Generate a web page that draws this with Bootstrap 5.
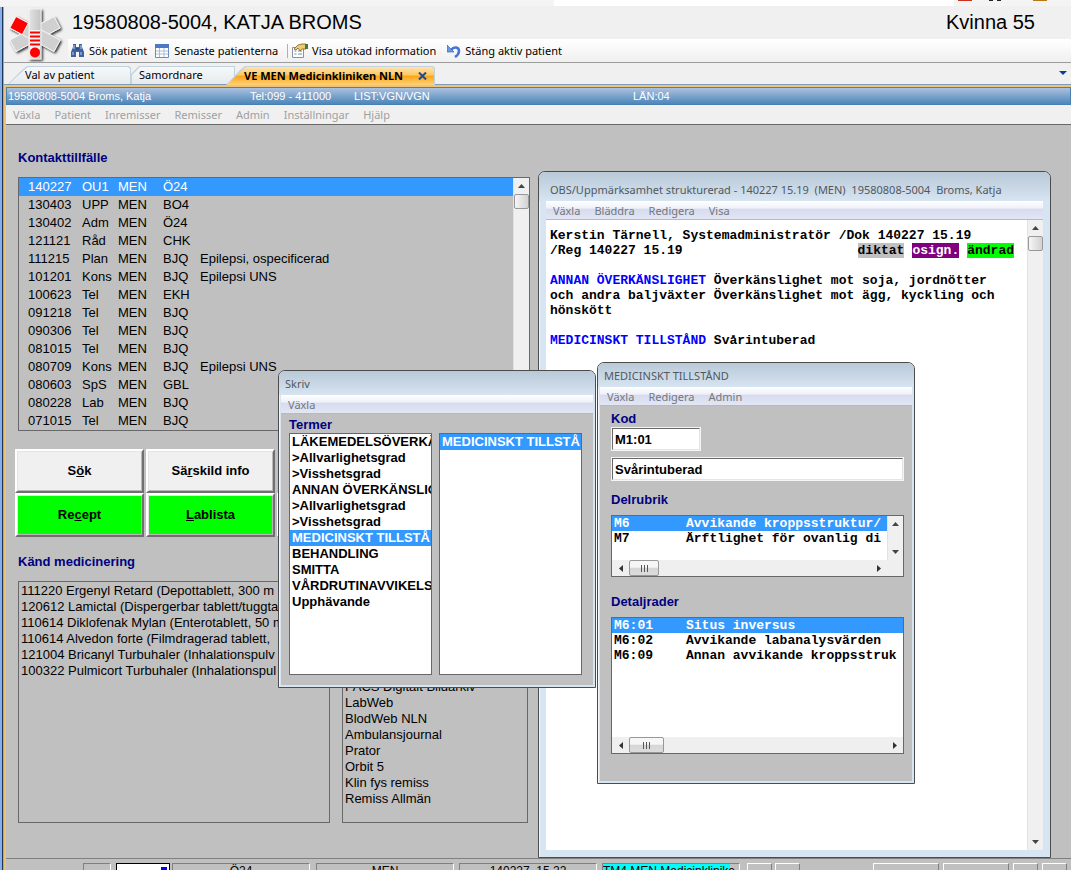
<!DOCTYPE html>
<html lang="sv">
<head>
<meta charset="utf-8">
<meta name="viewport" content="width=device-width, initial-scale=1">
<title>19580808-5004, KATJA BROMS</title>
<link href="https://cdn.jsdelivr.net/npm/bootstrap@5.3.0/dist/css/bootstrap.min.css" rel="stylesheet">
<style>
  :root { --face: #c0c0c0; --sel: #3399ff; --navy: #000080; --chrome: #f0f0f0; }
  body { background: var(--chrome); color: #000; overflow: hidden; font: 13px/16px "Liberation Sans", Arial, sans-serif; }
  button { border: 0; padding: 0; background: none; color: inherit; font: inherit; white-space: nowrap; }
  svg { display: block; flex: none; }
  .ui-text { font: 11px/16px "Noto Sans", "Segoe UI", sans-serif; }

  /* application frame; the status bar hangs below the window edge */
  .app { height: calc(100vh + 16px); }
  .app-edge { width: 4px; margin-top: 7px; background: linear-gradient(90deg, #88b0e8 2px, #1c3558 2px 3px, #a8a8a8 3px); }
  .app-main { min-width: 0; }
  .top-strip { height: 6px; margin-left: -4px; background: #f4f4f4; }
  .top-gap { width: 554px; }
  .top-doc { width: 400px; background: #fff; }
  .top-bits { height: 1px; }
  .masthead { height: 57px; border-bottom: 1px solid #9c9c9c; }
  .big-text { font-size: 20px; line-height: 33px; }
  .kvinna { padding-right: 36px; }
  .tools { height: 23px; padding-left: 2px; background: linear-gradient(#fff, #f0f0f0); }
  .tools button { gap: 4px; }
  .tools .close-patient { margin-left: 11px; }
  .tool-sep { width: 1px; height: 14px; margin: 0 4px 0 9px; background: #b0b0b0; }

  /* tabs */
  .tab-strip { height: 22px; padding: 3px 4px 0; border-bottom: 1px solid #7d9cbc; }
  .doc-tab { position: relative; height: 18px; z-index: 0; text-align: left; }
  .doc-tab::before, .doc-tab::after { content: ""; position: absolute; inset: 0; z-index: -1; background: #c2d2de; clip-path: polygon(0 100%, 14px 4px, 19px 0, calc(100% - 2px) 0, 100% 2px, 100% 100%); }
  .doc-tab::after { inset: 1px 1px 0 1px; background: linear-gradient(#f6f9fa, #e6eaec); }
  .tab-a { width: 123px; padding-left: 17px; }
  .tab-b { width: 104px; padding-left: 8px; }
  .tab-b::before, .tab-b::after { clip-path: polygon(0 8px, 8px 0, 100% 0, 100% 100%, 0 100%); }
  .tab-on { width: 209px; margin-left: -9px; padding: 0 8px 0 18px; height: 19px; margin-bottom: -1px; font-weight: 700; }
  .tab-on::after { background: linear-gradient(#ffe3ae, #ffc862 45%, #fba514 50%, #ffd27a); }
  .gold { border-top: 2px solid #f0c478; border-left: 2px solid #ecc27a; }
  .patient-bar { height: 18px; display: grid; grid-template-columns: 242px 104px 279px 1fr; padding: 0 1px; background: linear-gradient(#abc1df, #4c86b9); border: 1px solid #4880b4; font-size: 11px; line-height: 17px; color: #fff; }
  .main-menu { height: 20px; gap: 14px; padding: 1px 7px 0; border-bottom: 1px solid #686868; color: #a0a0a0; background: var(--chrome); }

  /* desktop */
  .desk { background: var(--face); }
  .base { width: 524px; padding: 22px 0 0 9px; }
  .base .inset-x { margin-left: 3px; }
  .head-n { margin: 0; font-size: 13px; height: 20px; line-height: 22px; font-weight: 700; color: var(--navy); }
  .well { border: 1px solid #686868; overflow: hidden; white-space: nowrap; }
  .well ul { margin: 0; padding: 0; list-style: none; }
  .contacts { height: 254px; margin-top: 10px; }
  .contacts table { width: 100%; table-layout: fixed; border-collapse: collapse; }
  .contacts td { padding: 0; height: 18px; line-height: 18px; }
  .contacts td:first-child { padding-left: 9px; }
  .c-date { width: 63px; } .c-type { width: 36px; } .c-unit { width: 45px; } .c-sign { width: 37px; }
  .is-sel { background: var(--sel); color: #fff; }
  .keys { display: grid; grid-template-columns: 129px 129px 129px; grid-auto-rows: 44px; column-gap: 2px; margin: 18px 0 14px; }
  .keys button, .keys .key-edge { background: var(--chrome); border: 2px solid; border-color: #fff #707070 #707070 #fff; font-weight: 700; box-shadow: inset 1px 1px #e4e4e4, inset -1px -1px #b8b8b8; }
  .keys .go { background: #0f0; }
  .boxes { gap: 12px; height: 242px; margin-top: 10px; }
  .boxes .meds { width: 312px; padding: 1px 0 0 2px; }
  .boxes .links { width: 186px; padding: 97px 0 0 2px; }

  /* floating windows */
  .win { position: absolute; border: 1px solid #4c4c4c; border-radius: 7px 7px 0 0; background: #d7e4f1; box-shadow: inset 1px 1px #f2f6fa; }
  .win-title { color: #50585f; padding-left: 6px; line-height: 26px; height: 24px; border-radius: 6px 6px 0 0; background: linear-gradient(#b9c9d8, #d7e4f1); white-space: pre; }
  .win-menu { height: 19px; gap: 14px; padding: 1px 7px 0; color: #74777b; border-bottom: 1px solid #b4b8cc; background: linear-gradient(#fff, #eef1f9 40%, #d6dbef 45%, #e2e6f5); }
  .win-main { background: var(--face); }
  .win-obs { left: 532px; top: 46px; width: 513px; bottom: 0; padding: 0 7px 7px; }
  .win-obs .win-title { margin: 0 -7px; padding-left: 11px; height: 29px; line-height: 36px; }
  .win-skriv { left: 272px; top: 245px; width: 318px; height: 318px; padding: 0 2px 2px; }
  .win-med { left: 591px; top: 237px; width: 318px; height: 422px; padding: 0 2px 2px; }
  .win-skriv .win-title, .win-med .win-title { margin: 0 -2px; }
  .win-skriv .win-main { padding: 2px 11px 10px 8px; font-weight: 700; }
  .win-skriv .head-n { height: 17px; line-height: 18px; }
  .win-skriv .well, .win-med .well { background: #fff; }
  .win-skriv .well { flex: 1 1 0; }
  .win-skriv li { padding-left: 2px; }
  .pair { gap: 7px; height: 242px; }
  .mono { font: 700 13px/15px "Liberation Mono", "Courier New", monospace; }
  .note { padding: 8px 13px 0 4px; }
  .note p { margin: 0; height: 15px; white-space: pre; }
  .note b { color: #00f; }
  .note-tags { gap: 8px; }
  .t-dikt { background: #c0c0c0; } .t-osign { background: #800080; color: #fff; } .t-andr { background: #0f0; }
  .win-med .win-main { padding: 3px 8px 0 11px; }
  .win-med label.head-n { height: 18px; line-height: 19px; }
  .field { display: block; height: 24px; border: 2px solid; border-color: #686868 #e4e4e4 #e4e4e4 #686868; outline: 1px solid #f4f4f4; outline-offset: -1px; padding: 0 2px; background: #fff; font: 700 13px/18px "Liberation Sans", Arial, sans-serif; border-radius: 0; }
  .field-kod { width: 90px; margin-bottom: 6px; }
  .field-name { width: 100%; margin-bottom: 8px; }
  .well-part { height: 62px; margin: 6px 0 14px; }
  .well-part .rows { min-height: 0; }
  .well-detail { height: 137px; margin-top: 6px; }
  .code-row { display: grid; grid-template-columns: 72px 1fr; padding-left: 2px; height: 15px; overflow: hidden; }

  /* scroll bars */
  .vbar { width: 16px; background: #f0f0f0; border-left: 1px solid #e2e2e2; }
  .vbar .arr { height: 16px; display: grid; place-items: center; }
  .hbar { height: 16px; background: #efefef; }
  .hbar .arr { width: 17px; display: grid; place-items: center; }
  .thumb { border: 1px solid #989898; border-radius: 2px; background: linear-gradient(90deg, #f6f6f6, #d2d2d2); }
  .hbar .thumb { width: 30px; display: grid; place-items: center; background: linear-gradient(#f6f6f6 45%, #d6d6d6 50%, #dcdcdc); }
  .hbar .thumb-w { width: 35px; }
  .vbar .thumb { height: 15px; }

  /* status bar */
  .status { height: 28px; border-top: 1px solid #808080; background: var(--face); padding: 4px 0 0 77px; }
  .status > div { height: 24px; border: 1px solid; border-color: #808080 #fff #fff #808080; text-align: center; flex: none; line-height: 15px; font-size: 12px; white-space: nowrap; overflow: hidden; }
  .status .up { border-color: #fff #808080 #808080 #fff; }
  .status .w-s { width: 25px; } .status .w-m { width: 66px; } .status .w-l { width: 138px; }
  .status .w-x { width: 28px; margin-right: 5px; }
  .status .entry { width: 54px; margin-right: 2px; border: 1px solid #000; background: #fff; }
  .gap-6 { margin-right: 6px; } .gap-5 { margin-right: 5px; } .gap-7 { margin-right: 7px; } .gap-3x { margin-right: 3px; }
  .caret { width: 6px; height: 20px; background: #00f; margin: 3px 2px 0 auto; }
  .cy { background: #0ff; display: block; width: 127px; text-align: left; }
</style>
</head>
<body>
<svg width="0" height="0" class="position-absolute" aria-hidden="true">
  <defs>
    <symbol id="up" viewBox="0 0 7 4"><path d="M0 4 3.500 0 7 4z" fill="#444"/></symbol>
    <symbol id="dn" viewBox="0 0 7 4"><path d="M0 0h7L3.500 4z" fill="#444"/></symbol>
    <symbol id="lf" viewBox="0 0 4 7"><path d="M4 0v7L0 3.500z" fill="#333"/></symbol>
    <symbol id="rt" viewBox="0 0 4 7"><path d="M0 0v7l4-3.500z" fill="#333"/></symbol>
    <symbol id="grip" viewBox="0 0 9 7"><path d="M1.500 0v7M4.500 0v7M7.500 0v7" stroke="#555"/></symbol>
  </defs>
</svg>

<div class="app d-flex">
  <div class="app-edge flex-shrink-0"></div>
  <div class="app-main flex-grow-1 d-flex flex-column">
    <div class="top-strip d-flex flex-shrink-0">
      <div class="top-gap flex-shrink-0"></div><div class="top-doc"></div>
      <svg class="top-bits" width="100" height="1"><path d="M4 0h14v1h-14z" fill="#c8321e"/><path d="M35 0h4v1h-4zM43 0h4v1h-4z" fill="#222"/><path d="M79 0h14v1h-14z" fill="#b87818"/></svg>
    </div>

    <header class="masthead d-flex flex-shrink-0">
      <svg width="64" height="56" viewBox="0 0 64 56" aria-hidden="true">
        <defs>
          <linearGradient id="arm" x1="0" x2="1"><stop offset="0" stop-color="#e2e2e2"/><stop offset="1" stop-color="#c4c4c4"/></linearGradient>
          <filter id="sh" x="-20%" y="-20%" width="150%" height="150%"><feDropShadow dx="1.500" dy="1.500" stdDeviation="1" flood-color="#000" flood-opacity=".8"/></filter>
        </defs>
        <g filter="url(#sh)" stroke="#fafafa" stroke-width=".8">
          <g fill="#d0d0d0">
            <rect x="24.500" y="3" width="13" height="22" transform="rotate(62 31 28)"/>
            <rect x="24.500" y="3" width="13" height="22" transform="rotate(118 31 28)"/>
            <rect x="24.500" y="3" width="13" height="22" transform="rotate(-118 31 28)"/>
            <rect x="24.500" y="3" width="13" height="22" transform="rotate(-62 31 28)"/>
          </g>
          <rect x="24.500" y="3" width="13" height="14" fill="#f00" transform="rotate(-62 31 28)"/>
          <rect x="25" y="3" width="12" height="50" fill="url(#arm)"/>
        </g>
        <path d="M26 24h10v19H26z" fill="#f4f4f4"/>
        <path d="M26 26.500h10M26 30.500h10M26 34.500h10M26 38.500h10" stroke="#f00" stroke-width="2"/>
        <circle cx="31" cy="46.500" r="5" fill="#f00"/>
      </svg>
      <div class="flex-grow-1">
        <div class="d-flex justify-content-between big-text">
          <div class="ps-1">19580808-5004, KATJA BROMS</div>
          <div class="kvinna">Kvinna 55</div>
        </div>
        <nav class="tools ui-text d-flex align-items-center">
          <button type="button" class="d-flex align-items-center">
            <svg width="15" height="15" viewBox="0 0 15 15"><path d="M3 1h3v3h3V1h3v3l2 5v5H9V9H6v5H1V9l2-5z" fill="#3c62a0"/><path d="M4 2v4M11 2v4M3 9v3M11 9v3" stroke="#b8d0f0"/><path d="M6 6h3" stroke="#1c3c78"/></svg>
            Sök patient
          </button>
          <button type="button" class="d-flex align-items-center ms-2">
            <svg width="15" height="14" viewBox="0 0 15 14"><path d="M.5.500h13v13H.5z" fill="#fff" stroke="#6a8cc4"/><path d="M0 0h14v4H0z" fill="#4c78c4"/><path d="M1 7h12M1 10h12M4.500 4v9M9 4v9" stroke="#a9bddc"/></svg>
            Senaste patienterna
          </button>
          <span class="tool-sep"></span>
          <button type="button" class="d-flex align-items-center">
            <svg width="16" height="15" viewBox="0 0 16 15"><path d="M.5 4.500h11v10H.5z" fill="#fff" stroke="#8494a8"/><path d="M2.500 8h2M6 8h4M2.500 11h2M6 11h4" stroke="#6a86b8"/><path d="m2 6 4-4 4-1h4v5h-4L8 8 6 5 4 7z" fill="#f0cc6c" stroke="#806020" stroke-width=".8"/><path d="M13 1h3v5h-3z" fill="#3c7a50"/></svg>
            Visa utökad information
          </button>
          <button type="button" class="d-flex align-items-center close-patient">
            <svg width="14" height="14" viewBox="0 0 14 14"><path d="M4 6c3-4 8-3 8 1 0 2-1 4-4 6" fill="none" stroke="#4474d4" stroke-width="2.500"/><path d="M0 1v7h7z" fill="#6c98e8" stroke="#2c58b4" stroke-width=".6"/></svg>
            Stäng aktiv patient
          </button>
        </nav>
      </div>
    </header>

    <div class="tab-strip ui-text d-flex flex-shrink-0">
      <button type="button" class="doc-tab tab-a">Val av patient</button>
      <button type="button" class="doc-tab tab-b">Samordnare</button>
      <button type="button" class="doc-tab tab-on d-flex align-items-center justify-content-between">VE MEN Medicinkliniken NLN
        <svg width="9" height="8" viewBox="0 0 9 8"><path d="m1 .5 7 7M8 .5l-7 7" stroke="#1c4a94" stroke-width="2"/></svg>
      </button>
      <svg class="ms-auto mt-1" width="8" height="5" viewBox="0 0 8 5"><path d="M0 1h8L4 5z" fill="#0c3c94"/></svg>
    </div>

    <div class="gold flex-grow-1 d-flex flex-column">
      <div class="patient-bar flex-shrink-0"><span>19580808-5004 Broms, Katja</span><span>Tel:099 - 411000</span><span>LIST:VGN/VGN</span><span>LÄN:04</span></div>
      <nav class="main-menu ui-text d-flex flex-shrink-0">
        <button type="button">Växla</button><button type="button">Patient</button><button type="button">Inremisser</button><button type="button">Remisser</button><button type="button">Admin</button><button type="button">Inställningar</button><button type="button">Hjälp</button>
      </nav>

      <main class="desk flex-grow-1 position-relative">
        <section class="base">
          <h2 class="head-n inset-x">Kontakttillfälle</h2>
          <div class="well contacts inset-x d-flex">
            <div class="flex-grow-1">
              <table>
                <colgroup><col class="c-date"><col class="c-type"><col class="c-unit"><col class="c-sign"><col></colgroup>
                <tbody>
                  <tr class="is-sel"><td>140227</td><td>OU1</td><td>MEN</td><td>Ö24</td><td></td></tr>
                  <tr><td>130403</td><td>UPP</td><td>MEN</td><td>BO4</td><td></td></tr>
                  <tr><td>130402</td><td>Adm</td><td>MEN</td><td>Ö24</td><td></td></tr>
                  <tr><td>121121</td><td>Råd</td><td>MEN</td><td>CHK</td><td></td></tr>
                  <tr><td>111215</td><td>Plan</td><td>MEN</td><td>BJQ</td><td>Epilepsi, ospecificerad</td></tr>
                  <tr><td>101201</td><td>Kons</td><td>MEN</td><td>BJQ</td><td>Epilepsi UNS</td></tr>
                  <tr><td>100623</td><td>Tel</td><td>MEN</td><td>EKH</td><td></td></tr>
                  <tr><td>091218</td><td>Tel</td><td>MEN</td><td>BJQ</td><td></td></tr>
                  <tr><td>090306</td><td>Tel</td><td>MEN</td><td>BJQ</td><td></td></tr>
                  <tr><td>081015</td><td>Tel</td><td>MEN</td><td>BJQ</td><td></td></tr>
                  <tr><td>080709</td><td>Kons</td><td>MEN</td><td>BJQ</td><td>Epilepsi UNS</td></tr>
                  <tr><td>080603</td><td>SpS</td><td>MEN</td><td>GBL</td><td></td></tr>
                  <tr><td>080228</td><td>Lab</td><td>MEN</td><td>BJQ</td><td></td></tr>
                  <tr><td>071015</td><td>Tel</td><td>MEN</td><td>BJQ</td><td></td></tr>
                </tbody>
              </table>
            </div>
            <div class="vbar flex-shrink-0"><div class="arr"><svg width="7" height="4"><use href="#up"/></svg></div><div class="thumb"></div></div>
          </div>

          <div class="keys">
            <button type="button">S<u>ö</u>k</button><button type="button">Sä<u>r</u>skild info</button><span></span>
            <button type="button" class="go">Re<u>c</u>ept</button><button type="button" class="go"><u>L</u>ablista</button><span class="key-edge"></span>
          </div>

          <h2 class="head-n inset-x">Känd medicinering</h2>
          <div class="boxes inset-x d-flex">
            <div class="well meds">
              <ul>
                <li>111220 Ergenyl Retard (Depottablett, 300 m</li>
                <li>120612 Lamictal (Dispergerbar tablett/tuggta</li>
                <li>110614 Diklofenak Mylan (Enterotablett, 50 m</li>
                <li>110614 Alvedon forte (Filmdragerad tablett,</li>
                <li>121004 Bricanyl Turbuhaler (Inhalationspulv</li>
                <li>100322 Pulmicort Turbuhaler (Inhalationspul</li>
              </ul>
            </div>
            <div class="well links">
              <ul>
                <li>PACS Digitalt Bildarkiv</li><li>LabWeb</li><li>BlodWeb NLN</li><li>Ambulansjournal</li><li>Prator</li><li>Orbit 5</li><li>Klin fys remiss</li><li>Remiss Allmän</li>
              </ul>
            </div>
          </div>
        </section>

        <section class="win win-obs d-flex flex-column">
          <div class="win-title ui-text">OBS/Uppmärksamhet strukturerad - 140227 15.19  (MEN)  19580808-5004  Broms, Katja</div>
          <nav class="win-menu ui-text d-flex flex-shrink-0"><button type="button">Växla</button><button type="button">Bläddra</button><button type="button">Redigera</button><button type="button">Visa</button></nav>
          <div class="flex-grow-1 d-flex bg-white">
            <div class="note mono flex-grow-1">
              <p>Kerstin Tärnell, Systemadministratör /Dok 140227 15.19</p>
              <p class="d-flex note-tags"><span class="me-auto">/Reg 140227 15.19</span><span class="t-dikt">diktat</span><span class="t-osign">osign.</span><span class="t-andr">ändrad</span></p>
              <p></p>
              <p><b>ANNAN ÖVERKÄNSLIGHET</b> Överkänslighet mot soja, jordnötter</p>
              <p>och andra baljväxter Överkänslighet mot ägg, kyckling och</p>
              <p>hönskött</p>
              <p></p>
              <p><b>MEDICINSKT TILLSTÅND</b> Svårintuberad</p>
            </div>
            <div class="vbar flex-shrink-0 d-flex flex-column"><div class="arr"><svg width="7" height="4"><use href="#up"/></svg></div><div class="thumb"></div><div class="arr mt-auto"><svg width="7" height="4"><use href="#dn"/></svg></div></div>
          </div>
        </section>

        <section class="win win-skriv d-flex flex-column">
          <div class="win-title ui-text">Skriv</div>
          <nav class="win-menu ui-text d-flex flex-shrink-0"><button type="button">Växla</button></nav>
          <div class="win-main flex-grow-1">
            <h2 class="head-n">Termer</h2>
            <div class="pair d-flex">
              <div class="well"><ul>
                <li>LÄKEMEDELSÖVERKÄ</li><li>&gt;Allvarlighetsgrad</li><li>&gt;Visshetsgrad</li><li>ANNAN ÖVERKÄNSLIG</li><li>&gt;Allvarlighetsgrad</li><li>&gt;Visshetsgrad</li><li class="is-sel">MEDICINSKT TILLSTÅ</li><li>BEHANDLING</li><li>SMITTA</li><li>VÅRDRUTINAVVIKELS</li><li>Upphävande</li>
              </ul></div>
              <div class="well"><ul><li class="is-sel">MEDICINSKT TILLSTÅ</li></ul></div>
            </div>
          </div>
        </section>

        <section class="win win-med d-flex flex-column">
          <div class="win-title ui-text">MEDICINSKT TILLSTÅND</div>
          <nav class="win-menu ui-text d-flex flex-shrink-0"><button type="button">Växla</button><button type="button">Redigera</button><button type="button">Admin</button></nav>
          <div class="win-main flex-grow-1">
            <label class="head-n d-block" for="kod">Kod</label>
            <input class="field field-kod" id="kod" type="text" value="M1:01">
            <input class="field field-name" type="text" value="Svårintuberad" aria-label="Kod, text">
            <h2 class="head-n">Delrubrik</h2>
            <div class="well well-part mono d-flex flex-column">
              <div class="rows flex-grow-1 d-flex">
                <div class="flex-grow-1 overflow-hidden">
                  <div class="code-row is-sel"><span>M6</span><span>Avvikande kroppsstruktur/</span></div>
                  <div class="code-row"><span>M7</span><span>Ärftlighet för ovanlig di</span></div>
                </div>
                <div class="vbar flex-shrink-0 d-flex flex-column"><div class="arr"><svg width="7" height="4"><use href="#up"/></svg></div><div class="arr mt-auto"><svg width="7" height="4"><use href="#dn"/></svg></div></div>
              </div>
              <div class="hbar d-flex pe-3"><div class="arr"><svg width="4" height="7"><use href="#lf"/></svg></div><div class="thumb"><svg width="9" height="7"><use href="#grip"/></svg></div><div class="arr ms-auto"><svg width="4" height="7"><use href="#rt"/></svg></div></div>
            </div>
            <h2 class="head-n">Detaljrader</h2>
            <div class="well well-detail mono d-flex flex-column">
              <div class="flex-grow-1">
                <div class="code-row is-sel"><span>M6:01</span><span>Situs inversus</span></div>
                <div class="code-row"><span>M6:02</span><span>Avvikande labanalysvärden</span></div>
                <div class="code-row"><span>M6:09</span><span>Annan avvikande kroppsstruk</span></div>
              </div>
              <div class="hbar d-flex"><div class="arr"><svg width="4" height="7"><use href="#lf"/></svg></div><div class="thumb thumb-w"><svg width="9" height="7"><use href="#grip"/></svg></div><div class="arr ms-auto"><svg width="4" height="7"><use href="#rt"/></svg></div></div>
            </div>
          </div>
        </section>
      </main>

      <footer class="status d-flex flex-shrink-0">
        <div class="w-x"></div>
        <div class="entry"><span class="caret d-block"></span></div>
        <div class="w-l gap-6">Ö24</div>
        <div class="w-l gap-5">MEN</div>
        <div class="w-l gap-5">140227&nbsp; 15.22</div>
        <div class="w-l gap-7"><span class="cy">TM4 MEN Medicinklinike</span></div>
        <div class="up w-s gap-3x"></div>
        <div class="up w-s"></div>
        <div class="up w-m ms-auto"></div>
        <div class="up w-m ms-1"></div>
        <div class="up w-s ms-1"></div>
        <div class="up w-s ms-1 me-1"></div>
      </footer>
    </div>
  </div>
</div>
<script src="https://cdn.jsdelivr.net/npm/bootstrap@5.3.0/dist/js/bootstrap.bundle.min.js"></script>
</body>
</html>
